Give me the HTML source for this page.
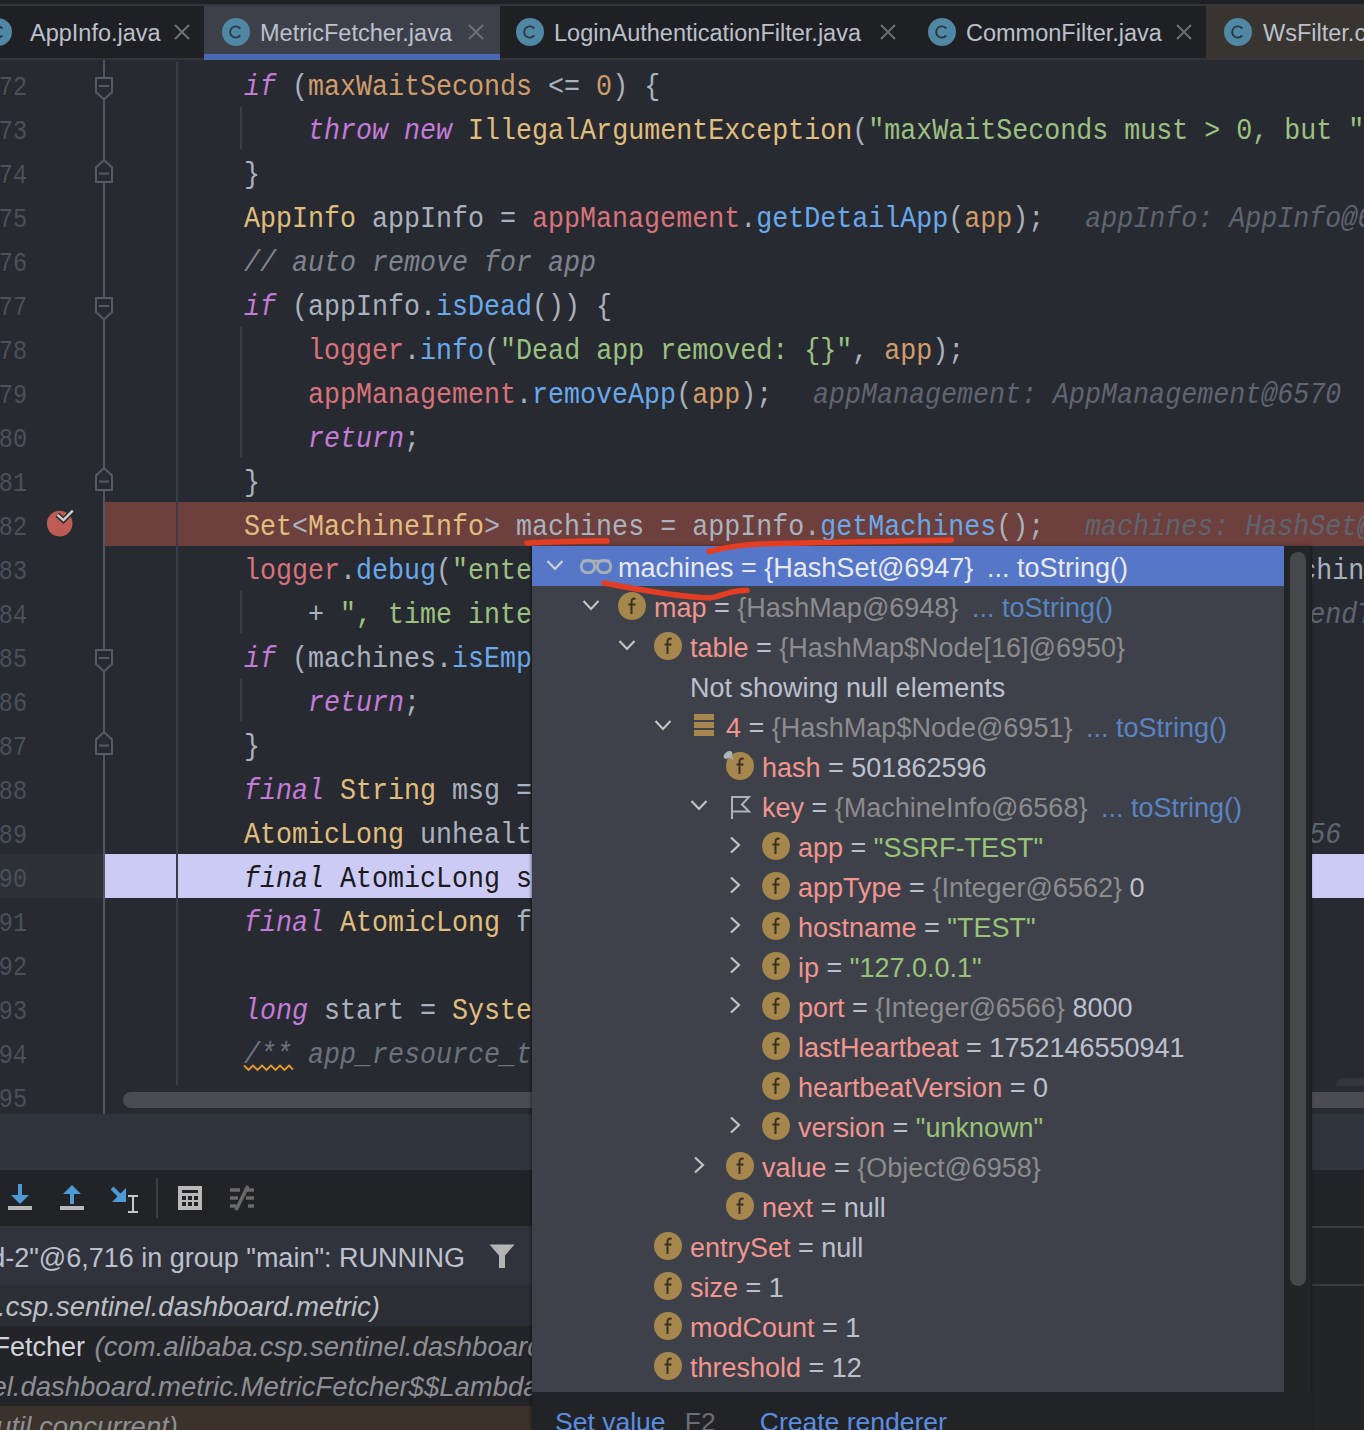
<!DOCTYPE html><html><head><meta charset="utf-8"><style>
*{margin:0;padding:0;box-sizing:border-box}
html,body{width:1364px;height:1430px;overflow:hidden;background:#282a31}
body{position:relative}
.a{position:absolute}
.mono{font-family:"Liberation Mono",monospace;font-size:30px;white-space:pre}
.sans{font-family:"Liberation Sans",sans-serif;white-space:pre}
.tab{top:7px;height:52px;font-size:23.5px;color:#bcc0cc;line-height:52px}
.ci{width:28px;height:28px;border-radius:50%;background:#4f87a5;top:18px}
.ln{left:-33px;width:60px;text-align:right;color:#4b5059;height:44px;line-height:44px;font-size:28px;transform:scaleX(0.84);transform-origin:100% 0}
.cl{left:116px;height:44px;line-height:44px;color:#abb2bf;transform:scaleX(0.8889);transform-origin:0 0}
.k{color:#c47bd9;font-style:italic}
.t{color:#e0bf7e}
.f{color:#d9737b}
.m{color:#68a9ec}
.s{color:#9bc281}
.n{color:#d09d6c}
.c{color:#7f848e;font-style:italic}
.c2{color:#6c727c;font-style:italic}
.h{color:#5f6570;font-style:italic;margin-left:46px}
.row{height:40px;line-height:40px;font-size:27px;color:#bcc0cc}
.nm{color:#f0958f}
.ty{color:#8c8c8c}
.lk{color:#5a84c2;margin-left:6px}
.sv{color:#98c379}
.lk0{margin-left:6px}
.fi{width:28px;height:28px;border-radius:50%;background:#a5864d}
</style></head><body><div class="a" style="left:0;top:0;width:1364px;height:60px;background:#1f2024"></div><div class="a" style="left:0;top:4px;width:1364px;height:2px;background:#34363c"></div><div class="a" style="left:0;top:58px;width:1364px;height:2px;background:#34363c"></div><div class="a" style="left:204px;top:6px;width:296px;height:52px;background:#3d4049"></div><div class="a" style="left:204px;top:54px;width:296px;height:6px;background:#4a69b5"></div><div class="a" style="left:1206px;top:6px;width:158px;height:52px;background:#38342f"></div><svg class="a" style="left:-16px;top:18px" width="28" height="28" viewBox="0 0 28 28"><circle cx="14" cy="14" r="14" fill="#4f87a5"/><path d="M18.2 10.6 A5.6 5.6 0 1 0 18.2 17.4" fill="none" stroke="#2a3a44" stroke-width="1.9"/></svg><div class="a sans tab" style="left:30px">AppInfo.java</div><svg class="a" style="left:174px;top:24px" width="16" height="16" viewBox="0 0 16 16"><path d="M1 1L15 15M15 1L1 15" stroke="#6e7177" stroke-width="2"/></svg><svg class="a" style="left:222px;top:18px" width="28" height="28" viewBox="0 0 28 28"><circle cx="14" cy="14" r="14" fill="#4f87a5"/><path d="M18.2 10.6 A5.6 5.6 0 1 0 18.2 17.4" fill="none" stroke="#2a3a44" stroke-width="1.9"/></svg><div class="a sans tab" style="left:260px">MetricFetcher.java</div><svg class="a" style="left:468px;top:24px" width="16" height="16" viewBox="0 0 16 16"><path d="M1 1L15 15M15 1L1 15" stroke="#6e7177" stroke-width="2"/></svg><svg class="a" style="left:516px;top:18px" width="28" height="28" viewBox="0 0 28 28"><circle cx="14" cy="14" r="14" fill="#4f87a5"/><path d="M18.2 10.6 A5.6 5.6 0 1 0 18.2 17.4" fill="none" stroke="#2a3a44" stroke-width="1.9"/></svg><div class="a sans tab" style="left:554px">LoginAuthenticationFilter.java</div><svg class="a" style="left:880px;top:24px" width="16" height="16" viewBox="0 0 16 16"><path d="M1 1L15 15M15 1L1 15" stroke="#6e7177" stroke-width="2"/></svg><svg class="a" style="left:928px;top:18px" width="28" height="28" viewBox="0 0 28 28"><circle cx="14" cy="14" r="14" fill="#4f87a5"/><path d="M18.2 10.6 A5.6 5.6 0 1 0 18.2 17.4" fill="none" stroke="#2a3a44" stroke-width="1.9"/></svg><div class="a sans tab" style="left:966px">CommonFilter.java</div><svg class="a" style="left:1176px;top:24px" width="16" height="16" viewBox="0 0 16 16"><path d="M1 1L15 15M15 1L1 15" stroke="#6e7177" stroke-width="2"/></svg><svg class="a" style="left:1224px;top:18px" width="28" height="28" viewBox="0 0 28 28"><circle cx="14" cy="14" r="14" fill="#4f87a5"/><path d="M18.2 10.6 A5.6 5.6 0 1 0 18.2 17.4" fill="none" stroke="#2a3a44" stroke-width="1.9"/></svg><div class="a sans tab" style="left:1263px">WsFilter.class</div><div class="a" style="left:0;top:854px;width:104px;height:44px;background:#2e3038"></div><div class="a" style="left:105px;top:502px;width:1259px;height:44px;background:#6d3f3d"></div><div class="a" style="left:105px;top:854px;width:1259px;height:44px;background:#cbcbf6"></div><div class="a" style="left:103px;top:60px;width:2px;height:1054px;background:#51565f"></div><div class="a" style="left:176px;top:62px;width:2px;height:1024px;background:#3b3e46"></div><div class="a" style="left:240px;top:107px;width:2px;height:42px;background:#3b3e46"></div><div class="a" style="left:240px;top:327px;width:2px;height:130px;background:#3b3e46"></div><div class="a" style="left:240px;top:591px;width:2px;height:42px;background:#3b3e46"></div><div class="a" style="left:240px;top:679px;width:2px;height:42px;background:#3b3e46"></div><div class="a mono ln" style="top:66px">72</div><div class="a mono ln" style="top:110px">73</div><div class="a mono ln" style="top:154px">74</div><div class="a mono ln" style="top:198px">75</div><div class="a mono ln" style="top:242px">76</div><div class="a mono ln" style="top:286px">77</div><div class="a mono ln" style="top:330px">78</div><div class="a mono ln" style="top:374px">79</div><div class="a mono ln" style="top:418px">80</div><div class="a mono ln" style="top:462px">81</div><div class="a mono ln" style="top:506px">82</div><div class="a mono ln" style="top:550px">83</div><div class="a mono ln" style="top:594px">84</div><div class="a mono ln" style="top:638px">85</div><div class="a mono ln" style="top:682px">86</div><div class="a mono ln" style="top:726px">87</div><div class="a mono ln" style="top:770px">88</div><div class="a mono ln" style="top:814px">89</div><div class="a mono ln" style="top:858px">90</div><div class="a mono ln" style="top:902px">91</div><div class="a mono ln" style="top:946px">92</div><div class="a mono ln" style="top:990px">93</div><div class="a mono ln" style="top:1034px">94</div><div class="a mono ln" style="top:1078px">95</div><svg class="a" style="left:95px;top:77px" width="18" height="24" viewBox="0 0 18 24"><path d="M1 1H17V15L9 22.5L1 15Z" fill="#282a31" stroke="#555b64" stroke-width="2"/><path d="M4 9H14" stroke="#555b64" stroke-width="2"/></svg><svg class="a" style="left:95px;top:159px" width="18" height="24" viewBox="0 0 18 24"><path d="M1 23H17V8.5L9 1L1 8.5Z" fill="#282a31" stroke="#555b64" stroke-width="2"/><path d="M4 14.5H14" stroke="#555b64" stroke-width="2"/></svg><svg class="a" style="left:95px;top:297px" width="18" height="24" viewBox="0 0 18 24"><path d="M1 1H17V15L9 22.5L1 15Z" fill="#282a31" stroke="#555b64" stroke-width="2"/><path d="M4 9H14" stroke="#555b64" stroke-width="2"/></svg><svg class="a" style="left:95px;top:467px" width="18" height="24" viewBox="0 0 18 24"><path d="M1 23H17V8.5L9 1L1 8.5Z" fill="#282a31" stroke="#555b64" stroke-width="2"/><path d="M4 14.5H14" stroke="#555b64" stroke-width="2"/></svg><svg class="a" style="left:95px;top:649px" width="18" height="24" viewBox="0 0 18 24"><path d="M1 1H17V15L9 22.5L1 15Z" fill="#282a31" stroke="#555b64" stroke-width="2"/><path d="M4 9H14" stroke="#555b64" stroke-width="2"/></svg><svg class="a" style="left:95px;top:731px" width="18" height="24" viewBox="0 0 18 24"><path d="M1 23H17V8.5L9 1L1 8.5Z" fill="#282a31" stroke="#555b64" stroke-width="2"/><path d="M4 14.5H14" stroke="#555b64" stroke-width="2"/></svg><svg class="a" style="left:44px;top:506px" width="34" height="34" viewBox="0 0 34 34"><circle cx="15.7" cy="17.6" r="12.8" fill="#bd5c54"/><path d="M13.3 8.8L19.4 14.3L29 4.4" fill="none" stroke="#282a31" stroke-width="5.2" stroke-linecap="butt"/><path d="M13.5 8.8L19.4 14.2L28.8 4.6" fill="none" stroke="#d0d0d3" stroke-width="2.4" stroke-linecap="butt"/></svg><div class="a mono cl" style="top:65px">        <span class="k">if</span> (<span class="n">maxWaitSeconds</span> &lt;= <span class="n">0</span>) {</div><div class="a mono cl" style="top:109px">            <span class="k">throw</span> <span class="k">new</span> <span class="t">IllegalArgumentException</span>(<span class="s">"maxWaitSeconds must &gt; 0, but "</span> + <span class="n">maxWaitSeconds</span>);</div><div class="a mono cl" style="top:153px">        }</div><div class="a mono cl" style="top:197px">        <span class="t">AppInfo</span> appInfo = <span class="f">appManagement</span>.<span class="m">getDetailApp</span>(<span class="n">app</span>);<span class="h">appInfo: AppInfo@6568</span></div><div class="a mono cl" style="top:241px">        <span class="c">// auto remove for app</span></div><div class="a mono cl" style="top:285px">        <span class="k">if</span> (appInfo.<span class="m">isDead</span>()) {</div><div class="a mono cl" style="top:329px">            <span class="f">logger</span>.<span class="m">info</span>(<span class="s">"Dead app removed: {}"</span>, <span class="n">app</span>);</div><div class="a mono cl" style="top:373px">            <span class="f">appManagement</span>.<span class="m">removeApp</span>(<span class="n">app</span>);<span class="h">appManagement: AppManagement@6570</span></div><div class="a mono cl" style="top:417px">            <span class="k">return</span>;</div><div class="a mono cl" style="top:461px">        }</div><div class="a mono cl" style="top:505px">        <span class="t">Set</span>&lt;<span class="t">MachineInfo</span>&gt; machines = appInfo.<span class="m">getMachines</span>();<span class="h">machines: HashSet@6947</span></div><div class="a mono cl" style="top:549px">        <span class="f">logger</span>.<span class="m">debug</span>(<span class="s">"enter fetchOnce("</span> + <span class="n">app</span> + <span class="s">"), machines.size()="</span> + machines.size()</div><div class="a mono cl" style="top:593px">            + <span class="s">", time intervalMs ["</span> + <span class="n">startTime</span> + <span class="s">", "</span> + <span class="n">endTime</span> + <span class="s">"]"</span>);<span class="h">endTime: 1752146580000</span></div><div class="a mono cl" style="top:637px">        <span class="k">if</span> (machines.<span class="m">isEmpty</span>()) {</div><div class="a mono cl" style="top:681px">            <span class="k">return</span>;</div><div class="a mono cl" style="top:725px">        }</div><div class="a mono cl" style="top:769px">        <span class="k">final</span> <span class="t">String</span> msg = <span class="s">"fetch"</span>;</div><div class="a mono cl" style="top:813px">        <span class="t">AtomicLong</span> unhealthy = <span class="k">new</span> <span class="t">AtomicLong</span>();<span class="h">unhealthy: AtomicLong@6956</span></div><div class="a mono cl" style="top:857px;color:#1a1a1a">        <span style="font-style:italic">final</span> AtomicLong success = new AtomicLong();</div><div class="a mono cl" style="top:901px">        <span class="k">final</span> <span class="t">AtomicLong</span> fail = <span class="k">new</span> <span class="t">AtomicLong</span>();</div><div class="a mono cl" style="top:945px"></div><div class="a mono cl" style="top:989px">        <span class="k">long</span> start = <span class="t">System</span>.<span class="m">currentTimeMillis</span>();</div><div class="a mono cl" style="top:1033px">        <span class="c2">/** app_resource_timeSeconds -&gt; metric */</span></div><div class="a mono cl" style="top:1077px">        <span class="k">final</span> <span class="t">Map</span>&lt;<span class="t">String</span>, <span class="t">MetricEntity</span>&gt; metricMap = <span class="k">new</span> <span class="t">ConcurrentHashMap</span>&lt;&gt;(16);</div><div class="a" style="left:105px;top:1085px;width:1259px;height:29px;background:#282a31"></div><svg class="a" style="left:243px;top:1063px" width="52" height="9" viewBox="0 0 52 9"><path d="M1 2.5L5.5 7L10 2.5L14.5 7L19 2.5L23.5 7L28 2.5L32.5 7L37 2.5L41.5 7L46 2.5L50 6.5" fill="none" stroke="#e39a2f" stroke-width="1.8"/></svg><div class="a" style="left:0;top:1086px;width:103px;height:28px;overflow:hidden"></div><div class="a" style="left:1336px;top:1078px;width:40px;height:8px;border-radius:8px 8px 0 0;background:#33363e"></div><div class="a" style="left:123px;top:1092px;width:1300px;height:16px;border-radius:8px;background:#4a4c52"></div><div class="a" style="left:0;top:1114px;width:1364px;height:56px;background:#30343d"></div><div class="a" style="left:0;top:1170px;width:1364px;height:56px;background:#212327"></div><div class="a" style="left:0;top:1226px;width:532px;height:59px;background:#30333b"></div><div class="a" style="left:0;top:1285px;width:532px;height:41px;background:#2b2e35"></div><div class="a" style="left:0;top:1326px;width:532px;height:80px;background:#222428"></div><div class="a" style="left:0;top:1406px;width:532px;height:24px;background:#3b322b"></div><div class="a" style="left:1312px;top:1226px;width:52px;height:204px;background:#222428"></div><div class="a" style="left:1312px;top:1226px;width:52px;height:2px;background:#393b41"></div><div class="a" style="left:1312px;top:1284px;width:52px;height:2px;background:#393b41"></div><svg class="a" style="left:0;top:1170px" width="280" height="56" viewBox="0 0 280 56"><path d="M20 14V28" stroke="#4d9bd6" stroke-width="4"/><path d="M11 25H29L20 34Z" fill="#4d9bd6"/><rect x="8" y="36" width="24" height="4" fill="#b9b9b9"/><path d="M72 21V34" stroke="#4d9bd6" stroke-width="4"/><path d="M63 24H81L72 15Z" fill="#4d9bd6"/><rect x="60" y="36" width="24" height="4" fill="#b9b9b9"/><path d="M112 18L122 28" stroke="#4d9bd6" stroke-width="4"/><path d="M126 18V32H112Z" fill="#4d9bd6"/><path d="M128 26H138M128 42H138M133 26V42" stroke="#c8c8c8" stroke-width="2"/><rect x="156" y="8" width="2" height="40" fill="#3c3e44"/><rect x="178" y="16" width="24" height="24" fill="#b9b9b9"/><rect x="182" y="20" width="16" height="3" fill="#212327"/><path d="M182 26h4v4h-4zM188 26h4v4h-4zM194 26h4v4h-4zM182 32h4v4h-4zM188 32h4v4h-4zM194 32h4v4h-4z" fill="#212327"/><path d="M230 20h10M244 20h10M230 28h8M246 28h8M230 36h6M248 36h6M236 40L248 16" stroke="#6a6a6a" stroke-width="3.5"/></svg><div class="a sans" style="left:0;top:1226px;width:480px;height:59px;overflow:hidden"><div class="a" style="right:15px;top:3px;line-height:59px;font-size:27px;color:#bcc0cc">"pool-1-thread-2"@6,716 in group "main": RUNNING</div></div><svg class="a" style="left:489px;top:1244px" width="26" height="25" viewBox="0 0 26 25"><path d="M0.5 0.5H25.5L16 11.5V24H10V11.5Z" fill="#b4b4b4"/></svg><div class="a sans" style="left:0;top:1286px;width:532px;height:40px;overflow:hidden"><div class="a" style="right:152px;top:1px;line-height:40px;font-size:27.5px;color:#bdbfc4;font-style:italic">fetchOnce:82, MetricFetcher (com.alibaba.csp.sentinel.dashboard.metric)</div></div><div class="a sans" style="left:0;top:1326px;width:532px;height:40px;overflow:hidden"><div class="a" style="left:-80px;top:1px;line-height:40px;font-size:27px;color:#d2d4d9">MetricFetcher <span style="color:#8d8f94;font-style:italic;font-size:27.5px;margin-left:2px">(com.alibaba.csp.sentinel.dashboard.metric)</span></div></div><div class="a sans" style="left:0;top:1366px;width:532px;height:40px;overflow:hidden"><div class="a" style="left:-82px;top:1px;line-height:40px;font-size:27.5px;color:#8d8f94;font-style:italic">sentinel.dashboard.metric.MetricFetcher$$Lambda$570/0x00000008005e1</div></div><div class="a sans" style="left:0;top:1406px;width:532px;height:24px;overflow:hidden"><div class="a" style="right:354px;top:1px;line-height:40px;font-size:27.5px;color:#8d8f94;font-style:italic">(java.util.concurrent)</div></div><div class="a" style="left:532px;top:546px;width:780px;height:884px;box-shadow:-1px 0 3px rgba(0,0,0,0.45)"></div><div class="a" style="left:532px;top:546px;width:752px;height:846px;background:#3e414a;overflow:hidden" id="pop"><div class="a" style="left:0;top:0;width:752px;height:40px;background:#5677c7"></div><svg class="a" style="left:14px;top:13px" width="20" height="14" viewBox="0 0 20 14"><path d="M1.5 2L9 10L16.5 2" fill="none" stroke="#cfcfd4" stroke-width="2.2"/></svg><svg class="a" style="left:47px;top:12px" width="34" height="18" viewBox="0 0 34 18"><path d="M3 3H31" stroke="#a9b1b8" stroke-width="2.6"/><rect x="2.3" y="2.3" width="13.4" height="12.4" rx="6" fill="none" stroke="#a9b1b8" stroke-width="2.8"/><rect x="18.3" y="2.3" width="13.4" height="12.4" rx="6" fill="none" stroke="#a9b1b8" stroke-width="2.8"/></svg><div class="a sans row" style="left:86px;top:2px;color:#e8e9ef">machines = {HashSet@6947} <span class="lk0">... toString()</span></div><svg class="a" style="left:50px;top:53px" width="20" height="14" viewBox="0 0 20 14"><path d="M1.5 2L9 10L16.5 2" fill="none" stroke="#c3c3c3" stroke-width="2.2"/></svg><svg class="a" style="left:80px;top:40px" width="34" height="34" viewBox="0 0 34 34"><circle cx="20" cy="20" r="14" fill="#a5864d"/><path d="M23.5 13.2C22.8 12.6 21.2 12.4 20.3 13.3C19.6 14 19.5 15 19.5 16.5V28M16.5 18.5H23.5" fill="none" stroke="#3b3122" stroke-width="2"/></svg><div class="a sans row" style="left:122px;top:42px"><span class="nm">map</span> = <span class="ty">{HashMap@6948}</span> <span class="lk">... toString()</span></div><svg class="a" style="left:86px;top:93px" width="20" height="14" viewBox="0 0 20 14"><path d="M1.5 2L9 10L16.5 2" fill="none" stroke="#c3c3c3" stroke-width="2.2"/></svg><svg class="a" style="left:116px;top:80px" width="34" height="34" viewBox="0 0 34 34"><circle cx="20" cy="20" r="14" fill="#a5864d"/><path d="M23.5 13.2C22.8 12.6 21.2 12.4 20.3 13.3C19.6 14 19.5 15 19.5 16.5V28M16.5 18.5H23.5" fill="none" stroke="#3b3122" stroke-width="2"/></svg><div class="a sans row" style="left:158px;top:82px"><span class="nm">table</span> = <span class="ty">{HashMap$Node[16]@6950}</span></div><div class="a sans row" style="left:158px;top:122px">Not showing null elements</div><svg class="a" style="left:122px;top:173px" width="20" height="14" viewBox="0 0 20 14"><path d="M1.5 2L9 10L16.5 2" fill="none" stroke="#c3c3c3" stroke-width="2.2"/></svg><svg class="a" style="left:162px;top:168px" width="20" height="22" viewBox="0 0 20 22"><path d="M0 0h20v6H0zM0 8h20v6H0zM0 16h20v6H0z" fill="#a5864d"/></svg><div class="a sans row" style="left:194px;top:162px"><span class="nm">4</span> = <span class="ty">{HashMap$Node@6951}</span> <span class="lk">... toString()</span></div><svg class="a" style="left:188px;top:200px" width="34" height="34" viewBox="0 0 34 34"><circle cx="20" cy="20" r="14" fill="#a5864d"/><path d="M23.5 13.2C22.8 12.6 21.2 12.4 20.3 13.3C19.6 14 19.5 15 19.5 16.5V28M16.5 18.5H23.5" fill="none" stroke="#3b3122" stroke-width="2"/><ellipse cx="8" cy="9" rx="5" ry="3.2" transform="rotate(-35 8 9)" fill="#a9b4bd"/><path d="M9 11L14 14.5L12 10Z" fill="#a9b4bd"/></svg><div class="a sans row" style="left:230px;top:202px"><span class="nm">hash</span> = 501862596</div><svg class="a" style="left:158px;top:253px" width="20" height="14" viewBox="0 0 20 14"><path d="M1.5 2L9 10L16.5 2" fill="none" stroke="#c3c3c3" stroke-width="2.2"/></svg><svg class="a" style="left:199px;top:250px" width="20" height="24" viewBox="0 0 20 24"><path d="M1 23V1H18L11 8.5L18 15.5H1" fill="none" stroke="#a9b4bd" stroke-width="2"/></svg><div class="a sans row" style="left:230px;top:242px"><span class="nm">key</span> = <span class="ty">{MachineInfo@6568}</span> <span class="lk">... toString()</span></div><svg class="a" style="left:197px;top:290px" width="14" height="20" viewBox="0 0 14 20"><path d="M2 1.5L10 9L2 16.5" fill="none" stroke="#c3c3c3" stroke-width="2.2"/></svg><svg class="a" style="left:224px;top:280px" width="34" height="34" viewBox="0 0 34 34"><circle cx="20" cy="20" r="14" fill="#a5864d"/><path d="M23.5 13.2C22.8 12.6 21.2 12.4 20.3 13.3C19.6 14 19.5 15 19.5 16.5V28M16.5 18.5H23.5" fill="none" stroke="#3b3122" stroke-width="2"/></svg><div class="a sans row" style="left:266px;top:282px"><span class="nm">app</span> = <span class="sv">"SSRF-TEST"</span></div><svg class="a" style="left:197px;top:330px" width="14" height="20" viewBox="0 0 14 20"><path d="M2 1.5L10 9L2 16.5" fill="none" stroke="#c3c3c3" stroke-width="2.2"/></svg><svg class="a" style="left:224px;top:320px" width="34" height="34" viewBox="0 0 34 34"><circle cx="20" cy="20" r="14" fill="#a5864d"/><path d="M23.5 13.2C22.8 12.6 21.2 12.4 20.3 13.3C19.6 14 19.5 15 19.5 16.5V28M16.5 18.5H23.5" fill="none" stroke="#3b3122" stroke-width="2"/></svg><div class="a sans row" style="left:266px;top:322px"><span class="nm">appType</span> = <span class="ty">{Integer@6562}</span> 0</div><svg class="a" style="left:197px;top:370px" width="14" height="20" viewBox="0 0 14 20"><path d="M2 1.5L10 9L2 16.5" fill="none" stroke="#c3c3c3" stroke-width="2.2"/></svg><svg class="a" style="left:224px;top:360px" width="34" height="34" viewBox="0 0 34 34"><circle cx="20" cy="20" r="14" fill="#a5864d"/><path d="M23.5 13.2C22.8 12.6 21.2 12.4 20.3 13.3C19.6 14 19.5 15 19.5 16.5V28M16.5 18.5H23.5" fill="none" stroke="#3b3122" stroke-width="2"/></svg><div class="a sans row" style="left:266px;top:362px"><span class="nm">hostname</span> = <span class="sv">"TEST"</span></div><svg class="a" style="left:197px;top:410px" width="14" height="20" viewBox="0 0 14 20"><path d="M2 1.5L10 9L2 16.5" fill="none" stroke="#c3c3c3" stroke-width="2.2"/></svg><svg class="a" style="left:224px;top:400px" width="34" height="34" viewBox="0 0 34 34"><circle cx="20" cy="20" r="14" fill="#a5864d"/><path d="M23.5 13.2C22.8 12.6 21.2 12.4 20.3 13.3C19.6 14 19.5 15 19.5 16.5V28M16.5 18.5H23.5" fill="none" stroke="#3b3122" stroke-width="2"/></svg><div class="a sans row" style="left:266px;top:402px"><span class="nm">ip</span> = <span class="sv">"127.0.0.1"</span></div><svg class="a" style="left:197px;top:450px" width="14" height="20" viewBox="0 0 14 20"><path d="M2 1.5L10 9L2 16.5" fill="none" stroke="#c3c3c3" stroke-width="2.2"/></svg><svg class="a" style="left:224px;top:440px" width="34" height="34" viewBox="0 0 34 34"><circle cx="20" cy="20" r="14" fill="#a5864d"/><path d="M23.5 13.2C22.8 12.6 21.2 12.4 20.3 13.3C19.6 14 19.5 15 19.5 16.5V28M16.5 18.5H23.5" fill="none" stroke="#3b3122" stroke-width="2"/></svg><div class="a sans row" style="left:266px;top:442px"><span class="nm">port</span> = <span class="ty">{Integer@6566}</span> 8000</div><svg class="a" style="left:224px;top:480px" width="34" height="34" viewBox="0 0 34 34"><circle cx="20" cy="20" r="14" fill="#a5864d"/><path d="M23.5 13.2C22.8 12.6 21.2 12.4 20.3 13.3C19.6 14 19.5 15 19.5 16.5V28M16.5 18.5H23.5" fill="none" stroke="#3b3122" stroke-width="2"/></svg><div class="a sans row" style="left:266px;top:482px"><span class="nm">lastHeartbeat</span> = 1752146550941</div><svg class="a" style="left:224px;top:520px" width="34" height="34" viewBox="0 0 34 34"><circle cx="20" cy="20" r="14" fill="#a5864d"/><path d="M23.5 13.2C22.8 12.6 21.2 12.4 20.3 13.3C19.6 14 19.5 15 19.5 16.5V28M16.5 18.5H23.5" fill="none" stroke="#3b3122" stroke-width="2"/></svg><div class="a sans row" style="left:266px;top:522px"><span class="nm">heartbeatVersion</span> = 0</div><svg class="a" style="left:197px;top:570px" width="14" height="20" viewBox="0 0 14 20"><path d="M2 1.5L10 9L2 16.5" fill="none" stroke="#c3c3c3" stroke-width="2.2"/></svg><svg class="a" style="left:224px;top:560px" width="34" height="34" viewBox="0 0 34 34"><circle cx="20" cy="20" r="14" fill="#a5864d"/><path d="M23.5 13.2C22.8 12.6 21.2 12.4 20.3 13.3C19.6 14 19.5 15 19.5 16.5V28M16.5 18.5H23.5" fill="none" stroke="#3b3122" stroke-width="2"/></svg><div class="a sans row" style="left:266px;top:562px"><span class="nm">version</span> = <span class="sv">"unknown"</span></div><svg class="a" style="left:161px;top:610px" width="14" height="20" viewBox="0 0 14 20"><path d="M2 1.5L10 9L2 16.5" fill="none" stroke="#c3c3c3" stroke-width="2.2"/></svg><svg class="a" style="left:188px;top:600px" width="34" height="34" viewBox="0 0 34 34"><circle cx="20" cy="20" r="14" fill="#a5864d"/><path d="M23.5 13.2C22.8 12.6 21.2 12.4 20.3 13.3C19.6 14 19.5 15 19.5 16.5V28M16.5 18.5H23.5" fill="none" stroke="#3b3122" stroke-width="2"/></svg><div class="a sans row" style="left:230px;top:602px"><span class="nm">value</span> = <span class="ty">{Object@6958}</span></div><svg class="a" style="left:188px;top:640px" width="34" height="34" viewBox="0 0 34 34"><circle cx="20" cy="20" r="14" fill="#a5864d"/><path d="M23.5 13.2C22.8 12.6 21.2 12.4 20.3 13.3C19.6 14 19.5 15 19.5 16.5V28M16.5 18.5H23.5" fill="none" stroke="#3b3122" stroke-width="2"/></svg><div class="a sans row" style="left:230px;top:642px"><span class="nm">next</span> = null</div><svg class="a" style="left:116px;top:680px" width="34" height="34" viewBox="0 0 34 34"><circle cx="20" cy="20" r="14" fill="#a5864d"/><path d="M23.5 13.2C22.8 12.6 21.2 12.4 20.3 13.3C19.6 14 19.5 15 19.5 16.5V28M16.5 18.5H23.5" fill="none" stroke="#3b3122" stroke-width="2"/></svg><div class="a sans row" style="left:158px;top:682px"><span class="nm">entrySet</span> = null</div><svg class="a" style="left:116px;top:720px" width="34" height="34" viewBox="0 0 34 34"><circle cx="20" cy="20" r="14" fill="#a5864d"/><path d="M23.5 13.2C22.8 12.6 21.2 12.4 20.3 13.3C19.6 14 19.5 15 19.5 16.5V28M16.5 18.5H23.5" fill="none" stroke="#3b3122" stroke-width="2"/></svg><div class="a sans row" style="left:158px;top:722px"><span class="nm">size</span> = 1</div><svg class="a" style="left:116px;top:760px" width="34" height="34" viewBox="0 0 34 34"><circle cx="20" cy="20" r="14" fill="#a5864d"/><path d="M23.5 13.2C22.8 12.6 21.2 12.4 20.3 13.3C19.6 14 19.5 15 19.5 16.5V28M16.5 18.5H23.5" fill="none" stroke="#3b3122" stroke-width="2"/></svg><div class="a sans row" style="left:158px;top:762px"><span class="nm">modCount</span> = 1</div><svg class="a" style="left:116px;top:800px" width="34" height="34" viewBox="0 0 34 34"><circle cx="20" cy="20" r="14" fill="#a5864d"/><path d="M23.5 13.2C22.8 12.6 21.2 12.4 20.3 13.3C19.6 14 19.5 15 19.5 16.5V28M16.5 18.5H23.5" fill="none" stroke="#3b3122" stroke-width="2"/></svg><div class="a sans row" style="left:158px;top:802px"><span class="nm">threshold</span> = 12</div><svg class="a" style="left:116px;top:840px" width="34" height="34" viewBox="0 0 34 34"><circle cx="20" cy="20" r="14" fill="#a5864d"/><path d="M23.5 13.2C22.8 12.6 21.2 12.4 20.3 13.3C19.6 14 19.5 15 19.5 16.5V28M16.5 18.5H23.5" fill="none" stroke="#3b3122" stroke-width="2"/></svg><div class="a sans row" style="left:158px;top:842px"><span class="nm">loadFactor</span> = 0.75</div></div><div class="a" style="left:1284px;top:546px;width:28px;height:846px;background:#222428"></div><div class="a" style="left:1311px;top:546px;width:1px;height:884px;background:#1c1d20"></div><div class="a" style="left:1290px;top:552px;width:16px;height:734px;border-radius:8px;background:#47484c"></div><div class="a" style="left:532px;top:1392px;width:780px;height:38px;background:#212327"></div><div class="a sans" style="left:555px;top:1402px;line-height:40px;font-size:26.5px;color:#5b8ee0">Set value <span style="color:#6b6e74;margin-left:12px">F2</span><span style="margin-left:44px">Create renderer</span></div><svg class="a" style="left:0;top:0" width="1364" height="1430" viewBox="0 0 1364 1430"><g fill="none" stroke="#e53d24" stroke-width="5.5" stroke-linecap="round" stroke-linejoin="round"><path d="M527 543C550 542 580 540.5 607 541"/><path d="M709 551.5C725 547 740 545 760 544C800 542.5 880 541.5 951.5 540"/><path d="M604 583C640 590 680 597 710 598C722 596 730 590 747 590.5"/></g></svg></body></html>
